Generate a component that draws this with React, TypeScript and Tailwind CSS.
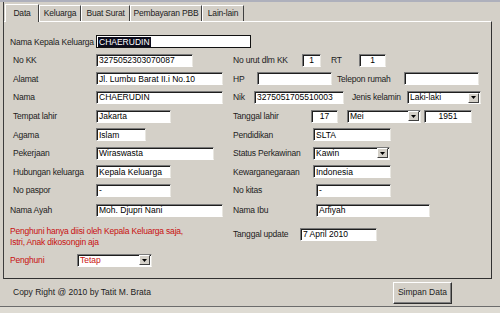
import React from 'react';

const font = { fontFamily: '"Liberation Sans", Arial, sans-serif' };

// sunken win-classic text box
const Box = ({ w, children, center }: { w: string; children?: React.ReactNode; center?: boolean }) => (
  <div
    className={`${w} h-[13px] bg-white border border-t-[#7a7a7a] border-l-[#7a7a7a] border-b-white border-r-[#e8e6e0] shadow-[inset_1px_1px_0_#1e1e1e] flex items-center text-[8.5px] text-black leading-none overflow-hidden whitespace-nowrap ${center ? 'justify-center' : 'pl-[2px]'}`}
  >
    {children}
  </div>
);

const Combo = ({ w, value, red }: { w: string; value: string; red?: boolean }) => (
  <div
    className={`${w} h-[13px] bg-white border border-t-[#7a7a7a] border-l-[#7a7a7a] border-b-white border-r-[#e8e6e0] shadow-[inset_1px_1px_0_#1e1e1e] flex items-center text-[8.5px] leading-none`}
  >
    <span className={`flex-1 pl-[2px] ${red ? 'text-[#c80f0f]' : 'text-black'}`}>{value}</span>
    <span className="w-[11px] h-[10px] mr-[1px] bg-[#d4d0c8] border border-t-white border-l-white border-b-[#404040] border-r-[#404040] flex items-center justify-center">
      <svg width="5" height="3" viewBox="0 0 5 3">
        <path d="M0 0H5L2.5 3Z" fill="#000" />
      </svg>
    </span>
  </div>
);

const Label = ({ w, children, red }: { w: string; children: React.ReactNode; red?: boolean }) => (
  <span
    className={`${w} shrink-0 text-[8.5px] tracking-[-0.2px] leading-none whitespace-nowrap ${red ? 'text-[#c80f0f]' : 'text-[#1c1c1c]'}`}
  >
    {children}
  </span>
);

const Row = ({ left, right, extra = '' }: { left: React.ReactNode; right?: React.ReactNode; extra?: string }) => (
  <div className={`flex items-center h-[18.6px] ${extra}`}>
    <div className="w-[223px] shrink-0 flex items-center">{left}</div>
    <div className="flex items-center">{right}</div>
  </div>
);

const tabs = [
  { name: 'Data', w: 'w-[34px]' },
  { name: 'Keluarga', w: 'w-[42px]' },
  { name: 'Buat Surat', w: 'w-[49px]' },
  { name: 'Pembayaran PBB', w: 'w-[72px]' },
  { name: 'Lain-lain', w: 'w-[42px]' },
];

export default function App() {
  return (
    <div className="w-[500px] h-[313px] bg-[#d4d0c8] overflow-hidden flex flex-col" style={font}>
      <div className="h-[2px] bg-[#aeb0bc]" />
      <div className="ml-[3px] border-l border-[#3c3c3c] flex flex-col">
        {/* tabs */}
        <div className="h-[19px] flex items-end pl-[1px]">
          {tabs.map((t, i) => (
            <div
              key={t.name}
              className={`${t.w} ${i === 0 ? 'h-[18px] -mb-[1px] bg-[#d4d0c8] z-10' : 'h-[16px]'} border-t border-l border-white border-r border-r-[#404040] flex items-center justify-center text-[8.5px] tracking-[-0.2px] text-[#1c1c1c] leading-none whitespace-nowrap`}
            >
              {t.name}
            </div>
          ))}
        </div>

        {/* panel */}
        <div className="w-[488px] h-[258px] border-t border-white border-r border-r-[#303030] border-b border-b-[#303030] pl-[6px] pt-[10.5px] flex flex-col">
          <Row
            left={
              <>
                <Label w="w-[86px]">Nama Kepala Keluarga</Label>
                <div className="w-[155px] h-[13px] bg-white border border-[#111] flex items-center text-[8.5px] leading-none pl-[1px] shrink-0">
                  <span className="bg-[#0c0c1c] text-white px-[1px] py-[1px]">CHAERUDIN</span>
                </div>
              </>
            }
          />
          <Row
            left={
              <>
                <Label w="w-[86px] pl-[3px]">No KK</Label>
                <Box w="w-[97px]">3275052303070087</Box>
              </>
            }
            right={
              <>
                <Label w="w-[69px]">No urut dlm KK</Label>
                <Box w="w-[19px]" center>1</Box>
                <Label w="w-[38px] pl-[10px]">RT</Label>
                <Box w="w-[27px]" center>1</Box>
              </>
            }
          />
          <Row
            left={
              <>
                <Label w="w-[86px] pl-[3px]">Alamat</Label>
                <Box w="w-[127px]">Jl. Lumbu Barat II.i No.10</Box>
              </>
            }
            right={
              <>
                <Label w="w-[24px]">HP</Label>
                <Box w="w-[75px]" />
                <Label w="w-[72px] pl-[5px]">Telepon rumah</Label>
                <Box w="w-[75px]" />
              </>
            }
          />
          <Row
            left={
              <>
                <Label w="w-[86px] pl-[3px]">Nama</Label>
                <Box w="w-[127px]">CHAERUDIN</Box>
              </>
            }
            right={
              <>
                <Label w="w-[21px]">Nik</Label>
                <Box w="w-[90px]">3275051705510003</Box>
                <Label w="w-[63px] pl-[8px]">Jenis kelamin</Label>
                <Combo w="w-[74px]" value="Laki-laki" />
              </>
            }
          />
          <Row
            left={
              <>
                <Label w="w-[86px] pl-[3px]">Tempat lahir</Label>
                <Box w="w-[75px]">Jakarta</Box>
              </>
            }
            right={
              <>
                <Label w="w-[78px]">Tanggal lahir</Label>
                <Box w="w-[27px]" center>17</Box>
                <span className="w-[9px]" />
                <Combo w="w-[74px]" value="Mei" />
                <span className="w-[3px]" />
                <Box w="w-[48px]" center>1951</Box>
              </>
            }
          />
          <Row
            left={
              <>
                <Label w="w-[86px] pl-[3px]">Agama</Label>
                <Box w="w-[50px]">Islam</Box>
              </>
            }
            right={
              <>
                <Label w="w-[80px]">Pendidikan</Label>
                <Box w="w-[78px]">SLTA</Box>
              </>
            }
          />
          <Row
            left={
              <>
                <Label w="w-[86px] pl-[3px]">Pekerjaan</Label>
                <Box w="w-[118px]">Wiraswasta</Box>
              </>
            }
            right={
              <>
                <Label w="w-[80px]">Status Perkawinan</Label>
                <Combo w="w-[77px]" value="Kawin" />
              </>
            }
          />
          <Row
            left={
              <>
                <Label w="w-[86px] pl-[3px]">Hubungan keluarga</Label>
                <Box w="w-[75px]">Kepala Keluarga</Box>
              </>
            }
            right={
              <>
                <Label w="w-[80px]">Kewarganegaraan</Label>
                <Box w="w-[78px]">Indonesia</Box>
              </>
            }
          />
          <Row
            left={
              <>
                <Label w="w-[86px] pl-[3px]">No paspor</Label>
                <Box w="w-[75px]">-</Box>
              </>
            }
            right={
              <>
                <Label w="w-[83px]">No kitas</Label>
                <Box w="w-[75px]">-</Box>
              </>
            }
          />
          <Row
            extra="mt-[1px]"
            left={
              <>
                <Label w="w-[86px]">Nama Ayah</Label>
                <Box w="w-[127px]">Moh. Djupri Nani</Box>
              </>
            }
            right={
              <>
                <Label w="w-[83px]">Nama Ibu</Label>
                <Box w="w-[114px]">Arfiyah</Box>
              </>
            }
          />

          <div className="flex mt-[7px]">
            <div className="w-[223px] shrink-0 text-[8.5px] tracking-[-0.2px] leading-[10.5px] text-[#c80f0f]">
              Penghuni hanya diisi oleh Kepala Keluarga saja,
              <br />
              Istri, Anak dikosongin aja
            </div>
            <div className="flex items-center h-[14px] mt-[1px]">
              <Label w="w-[67px]">Tanggal update</Label>
              <Box w="w-[77px]">7 April 2010</Box>
            </div>
          </div>

          <div className="flex items-center h-[14px] mt-[6px]">
            <Label w="w-[67px]" red>
              Penghuni
            </Label>
            <Combo w="w-[75px]" value="Tetap" red />
          </div>
        </div>
      </div>

      {/* footer */}
      <div className="h-[27px] flex items-center justify-between pl-[13px] pr-[48px]">
        <span className="text-[8.5px] text-[#1c1c1c] leading-none">Copy Right @ 2010 by Tatit M. Brata</span>
        <button className="w-[59px] h-[22px] bg-[#d4d0c8] border border-t-white border-l-white border-b-[#303030] border-r-[#303030] shadow-[inset_-1px_-1px_0_#808080] text-[8.5px] text-[#1c1c1c] leading-none">
          Simpan Data
        </button>
      </div>
      <div className="h-[1px] bg-[#6c6c6c]" />
      <div className="flex-1 bg-[#dedbd3]" />
    </div>
  );
}
